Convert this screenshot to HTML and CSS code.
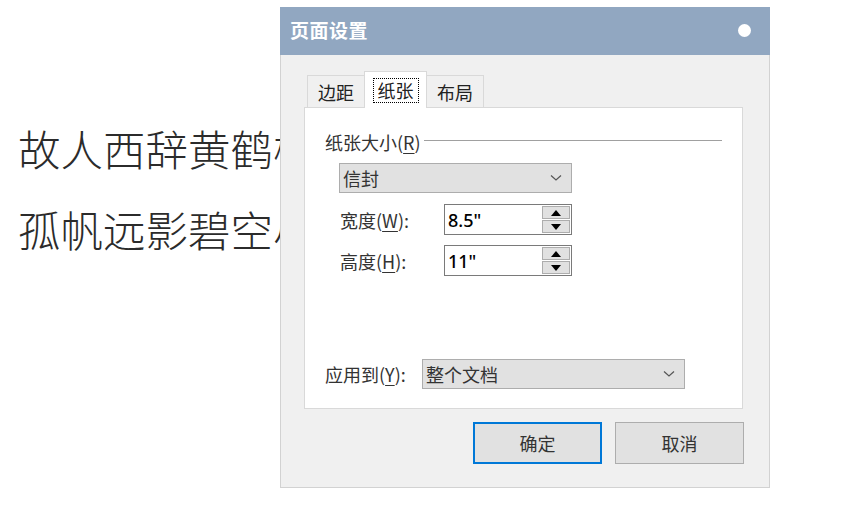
FILE: index.html
```html
<!DOCTYPE html>
<html lang="zh-CN">
<head>
<meta charset="utf-8">
<title>页面设置</title>
<link rel="stylesheet" href="styles.css">
</head>
<body>
<div class="doc">
  <p class="line">故人西辞黄鹤楼</p>
  <p class="line">孤帆远影碧空尽</p>
</div>

<div class="dialog">
  <div class="titlebar">
    <span class="title">页面设置</span>
    <span class="close"></span>
  </div>
  <div class="body">
    <div class="tabs">
      <div class="tab">边距</div>
      <div class="tab active"><span class="focus">纸张</span></div>
      <div class="tab">布局</div>
    </div>
    <div class="panel">
      <div class="group">
        <span class="group-label">纸张大小(<u>R</u>)</span>
        <span class="group-line"></span>
      </div>
      <div class="combo combo-size">
        <span>信封</span>
        <svg class="chev" width="12" height="8" viewBox="0 0 12 8"><polyline points="1,1.5 6,6 11,1.5" fill="none" stroke="#555" stroke-width="1.2"/></svg>
      </div>
      <div class="field">
        <span class="flabel">宽度(<u>W</u>):</span>
        <div class="spin">
          <span class="val">8.5"</span>
          <div class="spin-btns">
            <span class="sbtn"><svg width="10" height="6" viewBox="0 0 10 6"><polygon points="5,0 10,6 0,6" fill="#000"/></svg></span>
            <span class="sbtn"><svg width="10" height="6" viewBox="0 0 10 6"><polygon points="0,0 10,0 5,6" fill="#000"/></svg></span>
          </div>
        </div>
      </div>
      <div class="field">
        <span class="flabel">高度(<u>H</u>):</span>
        <div class="spin">
          <span class="val">11"</span>
          <div class="spin-btns">
            <span class="sbtn"><svg width="10" height="6" viewBox="0 0 10 6"><polygon points="5,0 10,6 0,6" fill="#000"/></svg></span>
            <span class="sbtn"><svg width="10" height="6" viewBox="0 0 10 6"><polygon points="0,0 10,0 5,6" fill="#000"/></svg></span>
          </div>
        </div>
      </div>
      <div class="apply">
        <span class="alabel">应用到(<u>Y</u>):</span>
        <div class="combo combo-apply">
          <span>整个文档</span>
          <svg class="chev" width="12" height="8" viewBox="0 0 12 8"><polyline points="1,1.5 6,6 11,1.5" fill="none" stroke="#555" stroke-width="1.2"/></svg>
        </div>
      </div>
    </div>
    <div class="buttons">
      <button class="btn primary">确定</button>
      <button class="btn">取消</button>
    </div>
  </div>
</div>
</body>
</html>
```
FILE: styles.css
```css
html, body {
  margin: 0;
  padding: 0;
  background: #fff;
}
body {
  width: 862px;
  height: 526px;
  position: relative;
  overflow: hidden;
  font-family: "Noto Sans CJK SC", sans-serif;
}
.doc {
  padding: 118px 0 0 18px;
}
.line {
  margin: 0 0 21px 0;
  font-size: 42.5px;
  line-height: 60px;
  font-weight: 300;
  color: #2b2b2b;
  white-space: nowrap;
}
.dialog {
  position: absolute;
  left: 280px;
  top: 7px;
  width: 488px;
  height: 480px;
  border: 1px solid #d2d2d2;
  border-top: none;
  background: #f0f0f0;
  display: flex;
  flex-direction: column;
}
.titlebar {
  height: 48px;
  margin: 0 -1px;
  background: #91a7c1;
  display: flex;
  align-items: center;
  justify-content: space-between;
  padding: 0 19px 0 10px;
}
.title {
  color: #fff;
  font-size: 19px;
  font-weight: 700;
  letter-spacing: 0.5px;
  margin-top: -3px;
}
.close {
  width: 13px;
  height: 13px;
  border-radius: 50%;
  background: #fff;
  margin-top: -2px;
}
.body {
  flex: 1;
  padding: 17px 0 0 23px;
  display: flex;
  flex-direction: column;
}
.tabs {
  display: flex;
  align-items: flex-end;
  padding-left: 3px;
  height: 35px;
  position: relative;
  z-index: 2;
}
.tab {
  height: 31px;
  border: 1px solid #d9d9d9;
  border-bottom: none;
  background: #f0f0f0;
  font-size: 18px;
  color: #222;
  display: flex;
  align-items: center;
  justify-content: center;
  width: 56px;
  line-height: 1;
}
.tab + .tab {
  margin-left: -1px;
}
.tab.active {
  width: 61px;
  background: #fff;
  margin-bottom: -1px;
  height: 36px;
  position: relative;
  z-index: 3;
}
.focus {
  border: 1px dotted #000;
  padding: 2px 4px 3px;
  line-height: 1;
}
.panel {
  background: #fff;
  border: 1px solid #d9d9d9;
  display: flex;
  flex-direction: column;
  padding: 0 20px 0 20px;
  box-sizing: border-box;
  width: 439px;
  height: 302px;
  position: relative;
  z-index: 1;
}
.group {
  display: flex;
  align-items: center;
  margin-top: 22px;
  height: 24px;
}
.group-label {
  font-size: 18px;
  color: #333;
  line-height: 24px;
  white-space: nowrap;
}
.group-label u, .flabel u, .alabel u {
  text-decoration-thickness: 1px;
  text-underline-offset: 3px;
}
.group-line {
  flex: 1;
  height: 1px;
  background: #a0a0a0;
  margin-left: 3px;
  margin-top: -4px;
}
.combo {
  height: 30px;
  box-sizing: border-box;
  border: 1px solid #adadad;
  background: #e1e1e1;
  display: flex;
  align-items: center;
  justify-content: space-between;
  font-size: 18px;
  color: #333;
  padding: 0 8px 0 3px;
}
.combo-size {
  width: 233px;
  margin: 9px 0 0 14px;
}
.chev {
  margin-right: 1px;
}
.field {
  display: flex;
  align-items: center;
  margin: 11px 0 0 15px;
  height: 31px;
}
.field + .field {
  margin-top: 10px;
}
.flabel {
  width: 104px;
  font-size: 18px;
  color: #333;
  white-space: nowrap;
}
.spin {
  width: 128px;
  height: 31px;
  box-sizing: border-box;
  border: 1px solid #7a7a7a;
  background: #fff;
  display: flex;
  align-items: center;
  justify-content: space-between;
  padding-left: 3px;
}
.val {
  font-family: "Noto Sans", "Liberation Sans", sans-serif;
  font-size: 18px;
  color: #000;
  font-weight: 500;
}
.spin-btns {
  display: flex;
  flex-direction: column;
  gap: 1px;
  margin-right: 1px;
}
.sbtn {
  width: 28px;
  height: 13px;
  box-sizing: border-box;
  border: 1px solid #adadad;
  background: #e1e1e1;
  display: flex;
  align-items: center;
  justify-content: center;
}
.apply {
  margin-top: auto;
  margin-bottom: 19px;
  display: flex;
  align-items: center;
}
.alabel {
  font-size: 18px;
  color: #333;
  width: 97px;
  white-space: nowrap;
}
.combo-apply {
  width: 263px;
}
.buttons {
  display: flex;
  justify-content: flex-end;
  gap: 13px;
  margin-top: 13px;
  padding-right: 25px;
}
.btn {
  width: 129px;
  height: 42px;
  box-sizing: border-box;
  border: 1px solid #adadad;
  background: #e1e1e1;
  font-family: "Noto Sans CJK SC", sans-serif;
  font-size: 18px;
  color: #333;
  padding: 0;
}
.btn.primary {
  border: 2px solid #0078d7;
}
```
